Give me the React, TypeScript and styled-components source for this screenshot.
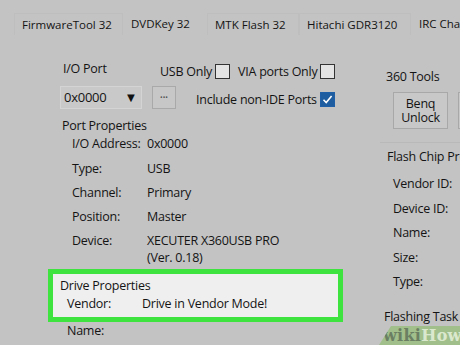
import React from 'react';
import styled, { createGlobalStyle } from 'styled-components';

const GlobalStyle = createGlobalStyle`
  html, body {
    margin: 0;
    padding: 0;
    width: 460px;
    height: 345px;
    overflow: hidden;
    background: #c3c3c3;
  }
  body {
    font-family: "Open Sans", "Noto Sans", sans-serif;
    color: #141414;
  }
`;

const Screen = styled.div`
  position: relative;
  width: 460px;
  height: 345px;
  overflow: hidden;
  background: #c3c3c3;
  font-size: 12.5px;
  letter-spacing: -0.25px;
`;

const TabBar = styled.div`
  display: flex;
  align-items: center;
  height: 46px;
  padding-left: 14px;
  white-space: nowrap;
  font-size: 11.5px;
  letter-spacing: 0;
  overflow: hidden;
`;

const Tab = styled.div<{ $w: number; $dy?: number }>`
  flex: 0 0 ${(p) => p.$w}px;
  box-sizing: border-box;
  padding: 3px 7px;
  margin-top: ${(p) => p.$dy ?? 0}px;
  border: 1px solid ${(p) => (p.$dy ? '#bebebe' : 'transparent')};
  border-bottom: none;
`;

const Body = styled.div`
  display: flex;
  white-space: nowrap;
`;

const LeftCol = styled.div`
  flex: 0 0 332px;
  display: flex;
  flex-direction: column;
  padding-left: 48px;
  padding-top: 12px;
`;

const RightCol = styled.div`
  flex: 1;
  display: flex;
  flex-direction: column;
  padding-top: 20px;
  overflow: hidden;
`;

const Row = styled.div<{ $pl?: number; $h?: number }>`
  display: flex;
  align-items: center;
  padding-left: ${(p) => p.$pl ?? 0}px;
  height: ${(p) => p.$h ?? 24}px;
`;

const Label = styled.span<{ $w?: number; $dy?: number }>`
  display: inline-block;
  width: ${(p) => (p.$w ? `${p.$w}px` : 'auto')};
  position: relative;
  top: ${(p) => p.$dy ?? 0}px;
`;

const Check = styled.span<{ $on?: boolean; $dy?: number }>`
  display: inline-flex;
  align-items: center;
  justify-content: center;
  position: relative;
  top: ${(p) => p.$dy ?? 0}px;
  width: 13px;
  height: 13px;
  margin-left: 3px;
  border: 1px solid ${(p) => (p.$on ? '#1f5fa8' : '#333')};
  background: ${(p) => (p.$on ? '#1e5d9f' : '#e4e4e4')};
`;

const Select = styled.div`
  display: flex;
  align-items: center;
  justify-content: space-between;
  width: 82px;
  height: 23px;
  box-sizing: border-box;
  padding: 0 4px 0 3px;
  background: #c9c9c9;
  border: 1px solid #d4d4d4;
  font-size: 13px;
`;

const Arrow = styled.span`
  font-size: 13px;
  color: #111;
`;

const SmallButton = styled.div`
  display: flex;
  align-items: center;
  justify-content: center;
  width: 24px;
  height: 23px;
  box-sizing: border-box;
  margin: 0 20px 0 10px;
  background: #c7c7c7;
  border: 1px solid #a9a9a9;
  font-size: 7px;
  letter-spacing: 0;
  color: #555;
`;

const Heading = styled.div<{ $pl?: number; $h?: number; $mt?: number }>`
  padding-left: ${(p) => p.$pl ?? 0}px;
  height: ${(p) => p.$h ?? 22}px;
  margin-top: ${(p) => p.$mt ?? 0}px;
  display: flex;
  align-items: center;
`;

const PropRow = styled.div<{ $pl?: number; $lw?: number; $h?: number }>`
  display: grid;
  grid-template-columns: ${(p) => p.$lw ?? 75}px auto;
  align-items: start;
  padding-left: ${(p) => p.$pl ?? 24}px;
  height: ${(p) => p.$h ?? 24}px;
  line-height: 17px;
`;

const Highlight = styled.div`
  width: 295px;
  height: 53px;
  box-sizing: border-box;
  border: 5px solid #3fe33f;
  background: #efefef;
  padding: 1px 0 0 7px;
  display: flex;
  flex-direction: column;
`;

const ToolButton = styled.div`
  display: flex;
  flex: 0 0 55px;
  align-items: center;
  justify-content: center;
  text-align: center;
  height: 37px;
  box-sizing: border-box;
  background: #c8c8c8;
  border: 1px solid #a8a8a8;
  line-height: 14px;
`;

const ToolRow = styled.div`
  display: flex;
  gap: 10px;
  padding-left: 13px;
  margin-top: 6px;
  padding-bottom: 13px;
  border-bottom: 1px solid #b9b9b9;
`;

const Watermark = styled.div`
  position: absolute;
  right: 0;
  bottom: 0;
  width: 77px;
  height: 19px;
  background: rgba(150, 190, 120, 0.75);
  clip-path: polygon(12px 0, 100% 0, 100% 100%, 0 100%);
  display: flex;
  align-items: center;
  padding-left: 4px;
  font-family: "DejaVu Serif", "Liberation Serif", serif;
  font-weight: bold;
  font-size: 16px;
  letter-spacing: 0.3px;
`;

const Wiki = styled.span`
  color: #6b7f62;
`;

const How = styled.span`
  color: rgba(235, 245, 225, 0.8);
`;

const tabs: [string, number, number?][] = [
  ['FirmwareTool 32', 109, 1],
  ['DVDKey 32', 84, 0],
  ['MTK Flash 32', 92, 1],
  ['Hitachi GDR3120', 112, 2],
  ['IRC Challenge', 100, 0],
];

const portProps: [string, string][] = [
  ['Type:', 'USB'],
  ['Channel:', 'Primary'],
  ['Position:', 'Master'],
];

const chipProps = ['Vendor ID:', 'Device ID:', 'Name:', 'Size:', 'Type:'];

const Tick = () => (
  <svg width="11" height="11" viewBox="0 0 11 11">
    <path d="M1.5 5.8 L4.2 8.5 L9.6 2" fill="none" stroke="#fff" strokeWidth="1.6" />
  </svg>
);

export default function App() {
  return (
    <Screen>
      <GlobalStyle />
      <TabBar>
        {tabs.map(([t, w, dy]) => (
          <Tab key={t} $w={w} $dy={dy}>
            {t}
          </Tab>
        ))}
      </TabBar>
      <Body>
        <LeftCol>
          <Row $pl={15} $h={26}>
            <Label $w={97} $dy={-3}>I/O Port</Label>
            <Label>USB Only</Label>
            <Check />
            <Label style={{ marginLeft: 8 }}>VIA ports Only</Label>
            <Check />
          </Row>
          <Row $pl={12} $h={26}>
            <Select>
              <span>0x0000</span>
              <Arrow>▼</Arrow>
            </Select>
            <SmallButton>•••</SmallButton>
            <Label $dy={2}>Include non-IDE Ports</Label>
            <Check $on $dy={2}>
              <Tick />
            </Check>
          </Row>
          <Heading $pl={14} $h={20} $mt={5}>
            Port Properties
          </Heading>
          <PropRow $h={25}>
            <span>I/O Address:</span>
            <span>0x0000</span>
          </PropRow>
          {portProps.map(([k, v]) => (
            <PropRow key={k}>
              <span>{k}</span>
              <span>{v}</span>
            </PropRow>
          ))}
          <PropRow $h={37}>
            <span>Device:</span>
            <span>
              XECUTER X360USB PRO
              <br />
              (Ver. 0.18)
            </span>
          </PropRow>
          <Highlight>
            <Heading $h={20}>Drive Properties</Heading>
            <PropRow $pl={7} $lw={75} $h={20}>
              <span>Vendor:</span>
              <span>Drive in Vendor Mode!</span>
            </PropRow>
          </Highlight>
          <PropRow $pl={19}>
            <span>Name:</span>
          </PropRow>
        </LeftCol>
        <RightCol>
          <Heading $pl={6} $h={20}>360 Tools</Heading>
          <ToolRow>
            <ToolButton>
              Benq
              <br />
              Unlock
            </ToolButton>
            <ToolButton />
          </ToolRow>
          <Heading $pl={7} $h={26}>Flash Chip Properties</Heading>
          <Heading $h={6} />
          {chipProps.map((k) => (
            <PropRow key={k} $pl={13} $h={24.5}>
              <span>{k}</span>
            </PropRow>
          ))}
          <Heading $pl={4} $h={26} $mt={6}>
            Flashing Task
          </Heading>
        </RightCol>
      </Body>
      <Watermark>
        <Wiki>wiki</Wiki>
        <How>How</How>
      </Watermark>
    </Screen>
  );
}
